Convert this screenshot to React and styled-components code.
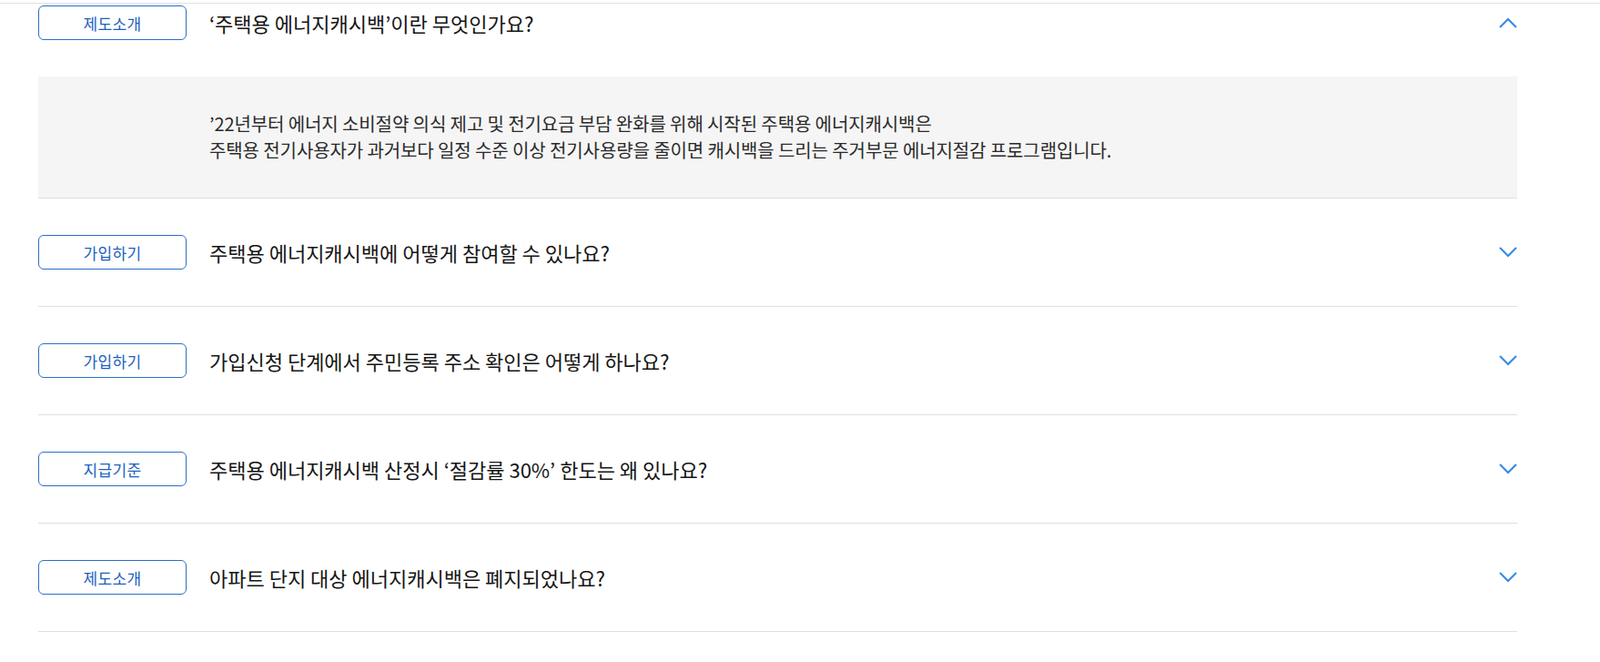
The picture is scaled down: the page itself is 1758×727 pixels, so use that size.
import React from "react";
import styled, {createGlobalStyle} from "styled-components";

const GlobalStyle = createGlobalStyle`
  body {
    margin: 0;
    background: #fff;
    font-family: "Noto Sans CJK KR", "Noto Sans", sans-serif;
    overflow: hidden;
  }
`

const Page = styled.div`
  position: relative;
  width: 100%;
  height: 727px;
  overflow: hidden;
`

const TopLine = styled.div`
  position: absolute;
  top: 3px;
  left: 0;
  right: 0;
  height: 1px;
  background: #e2e2e2;
  z-index: 2;
`

const List = styled.ul`
  list-style: none;
  margin: -34px 0 0 42px;
  padding: 0;
  width: 1625px;
`

const Item = styled.li`
  border-bottom: ${p => p.$open ? 'none' : '1px solid #dcdfe6'};
`

const Header = styled.div`
  display: grid;
  grid-template-columns: 163px 1fr 20px;
  column-gap: 25px;
  align-items: center;
  height: 118px;
  cursor: pointer;
`

const Badge = styled.span`
  display: flex;
  align-items: center;
  justify-content: center;
  box-sizing: border-box;
  height: 38px;
  border: 1px solid #2b6fc8;
  border-radius: 6px;
  color: #1c5fbf;
  font-size: 17px;
  letter-spacing: 0.4px;
`

const Question = styled.p`
  margin: 0;
  color: #151515;
  font-size: 22px;
  letter-spacing: 0;
  line-height: 1;
`

const Answer = styled.div`
  background: #f5f5f5;
  border-bottom: 1px solid #dcdfe6;
  padding: 37px 0 38px 188px;
  color: #2a2a2a;
  font-size: 20px;
  letter-spacing: -0.1px;
  line-height: 29px;
`

const Chevron = ({up}) => (
  <svg width="20" height="12" viewBox="0 0 20 12">
    <polyline
      points={up ? "1,11 10,2 19,11" : "1,1 10,10 19,1"}
      fill="none"
      stroke="#3a8ae8"
      strokeWidth="2.2"
    />
  </svg>
)

const faqs = [
  {
    tag: '제도소개',
    q: '‘주택용 에너지캐시백’이란 무엇인가요?',
    a: ['’22년부터 에너지 소비절약 의식 제고 및 전기요금 부담 완화를 위해 시작된 주택용 에너지캐시백은',
      '주택용 전기사용자가 과거보다 일정 수준 이상 전기사용량을 줄이면 캐시백을 드리는 주거부문 에너지절감 프로그램입니다.'],
  },
  {tag: '가입하기', q: '주택용 에너지캐시백에 어떻게 참여할 수 있나요?'},
  {tag: '가입하기', q: '가입신청 단계에서 주민등록 주소 확인은 어떻게 하나요?'},
  {tag: '지급기준', q: '주택용 에너지캐시백 산정시 ‘절감률 30%’ 한도는 왜 있나요?'},
  {tag: '제도소개', q: '아파트 단지 대상 에너지캐시백은 폐지되었나요?'},
]

export default function App() {
  return <Page>
    <GlobalStyle/>
    <TopLine/>
    <List>
      {faqs.map((f, i) => {
        const open = !!f.a
        return <Item key={i} $open={open}>
          <Header>
            <Badge>{f.tag}</Badge>
            <Question>{f.q}</Question>
            <Chevron up={open}/>
          </Header>
          {open && <Answer>
            {f.a.map((line, j) => <div key={j}>{line}</div>)}
          </Answer>}
        </Item>
      })}
    </List>
  </Page>
}
